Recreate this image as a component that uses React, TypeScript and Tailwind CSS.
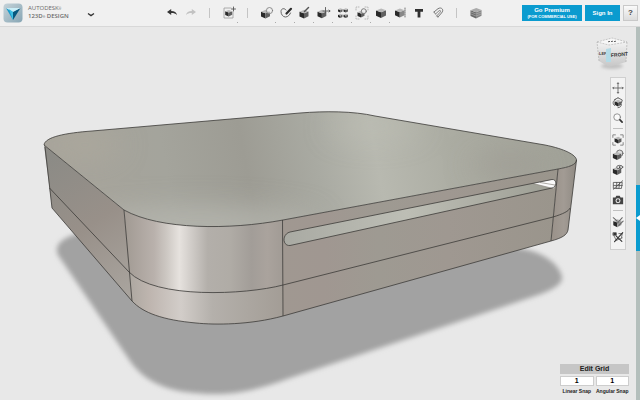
import React from "react";
import type { ReactNode } from "react";

function Svg({ children, size = 14 }: { children: ReactNode; size?: number }) {
  return (
    <svg width={size} height={size} viewBox="0 0 14 14" fill="none" stroke="#444" strokeLinecap="round" strokeLinejoin="round" aria-hidden="true">
      {children}
    </svg>
  );
}

/* Small shaded box, ten units wide, shared by most of the tool icons. */
function Box({ at = "translate(2 2)", dark = "#292929", side = "#606060", top = "#b9b9b9" }: { at?: string; dark?: string; side?: string; top?: string }) {
  return (
    <g transform={at} stroke="none">
      <path d="M0 2.5 5 4.3V10L0 7.7Z" fill={dark} />
      <path d="M5 4.3 10 2.3V7.5L5 10Z" fill={side} />
      <path d="M0 2.5 5.2.4 10 2.3 5 4.3Z" fill={top} />
    </g>
  );
}

const brackets = "M1 4V1H4M10 1H13V4M13 10V13H10M4 13H1V10";

const icons: Record<string, ReactNode> = {
  undo: <path d="M2 6 6.2 3V5C9.500 5 11.500 6 12 9.2 10.500 7.400 9 7 6.200 7V9Z" fill="#333" stroke="none" />,
  redo: <path d="M12 6 7.800 3V5C4.500 5 2.500 6 2 9.200 3.500 7.400 5 7 7.800 7V9Z" fill="#c2c2c2" stroke="none" />,
  insert: (
    <>
      <path d="M9 2H2V12H11V6" stroke="#9a9a9a" strokeWidth=".8" />
      <path d="M11.500 1V5M9.500 3H13.500" stroke="#555" strokeWidth=".9" />
      <Box at="translate(3.200 3.600) scale(.7)" />
    </>
  ),
  primitives: (
    <>
      <Box at="translate(1 3.500) scale(.9)" />
      <circle cx="9.500" cy="4.600" r="3.100" fill="#eee" fillOpacity=".6" stroke="#777" strokeWidth=".8" />
    </>
  ),
  sketch: (
    <>
      <path d="M7 4C6 2 2 2 2 5.500 2 8.500 4 11 6.500 11 9 11 11 8.500 11.500 7" stroke="#666" />
      <path d="M7.500 7.500 12 2.800" stroke="#2c2c2c" strokeWidth="2.200" />
    </>
  ),
  construct: (
    <>
      <Box at="translate(1.500 3.500) scale(.9)" />
      <path d="M6.500 5.500 10.500 1.500" stroke="#555" strokeWidth="1.500" />
    </>
  ),
  modify: (
    <>
      <Box at="translate(.5 3.500) scale(.88)" />
      <path d="M6 5H13M8.500 1.500V7M12 4 13 5 12 6" stroke="#555" strokeWidth=".9" />
    </>
  ),
  pattern: (
    <>
      <Box at="translate(2 2) scale(.45)" />
      <Box at="translate(7.500 2) scale(.45)" />
      <Box at="translate(2 7.500) scale(.45)" />
      <Box at="translate(7.500 7.500) scale(.45)" />
    </>
  ),
  grouping: (
    <>
      <path d={brackets} stroke="#aaa" strokeWidth=".8" strokeDasharray="1.200 1.500" />
      <Box at="translate(2.500 4.500) scale(.7)" />
      <circle cx="8.800" cy="5.200" r="2.500" fill="#eee" fillOpacity=".8" stroke="#666" strokeWidth=".8" />
    </>
  ),
  combine: <Box />,
  measure: (
    <>
      <Box at="translate(2 2) scale(.95)" side="#888" />
      <path d="M12 2V12" stroke="#777" strokeDasharray="1 1" />
    </>
  ),
  text: <path d="M3 3H11V5.800H8.400V11.500H5.600V5.800H3Z" fill="#303030" stroke="none" />,
  snap: (
    <>
      <path d="M3 6 7 2.700C10.500.5 13.500 4 10.500 7L7 11" stroke="#777" strokeWidth="1" />
      <path d="M4.500 8 8 4.800C9.300 4 10.300 5 9 6.300L5.700 10M3 6 4.500 8M5.700 10 7 11" stroke="#777" strokeWidth=".9" />
    </>
  ),
  material: (
    <>
      <Box at="translate(1.500 1.500) scale(1.100)" dark="#686868" side="#858585" top="#aaa" />
      <path d="M2 6 7 8 12.400 6M2 8 7 10 12.400 8" stroke="#b5b5b5" strokeWidth=".6" />
    </>
  ),
  pan: <path d="M7 1V13M1 7H13M6 2 7 1 8 2M6 12 7 13 8 12M2 6 1 7 2 8M12 6 13 7 12 8" stroke="#555" strokeWidth=".9" />,
  orbit: (
    <>
      <Box at="translate(3 3) scale(.8)" />
      <path d="M3 10C0 8 1 4 4 3M7 1 12 3.500 11 7M11 9C11 11 9 12.500 7 12.500M3 3 7 1" stroke="#555" strokeWidth="1" />
    </>
  ),
  zoom: (
    <>
      <circle cx="6" cy="6" r="3.900" fill="#fafafa" stroke="#777" strokeWidth=".9" />
      <path d="M9.300 9.300 11.800 11.800" stroke="#333" strokeWidth="2" />
    </>
  ),
  fit: (
    <>
      <path d={brackets} stroke="#777" />
      <Box at="translate(3 3) scale(.8)" />
    </>
  ),
  shading: (
    <>
      <circle cx="9" cy="5" r="3.800" fill="#ddd" stroke="#555" strokeWidth=".9" />
      <Box at="translate(1 3) scale(.98)" />
    </>
  ),
  visibility: (
    <>
      <Box at="translate(1 3) scale(.98)" />
      <ellipse cx="9" cy="3.600" rx="3.600" ry="2" fill="#eee" stroke="#444" strokeWidth=".9" />
      <circle cx="9" cy="3.600" r="1" fill="#333" stroke="none" />
    </>
  ),
  gridToggle: <path d="M2 4H12L11 11H2ZM2 7.500H12M5.500 4V11M9 4 8 11M1.500 12 12.500 2" stroke="#555" strokeWidth="1" />,
  camera: (
    <>
      <path d="M1 4H4L5 2H9L10 4H13V12H1Z" fill="#444" stroke="none" />
      <circle cx="7" cy="7.800" r="2.900" fill="#eee" stroke="none" />
      <circle cx="7" cy="7.800" r="1.700" fill="#444" stroke="none" />
    </>
  ),
  sketchView: (
    <>
      <Box at="translate(1.500 3.500) scale(.95)" side="#999" />
      <path d="M1.500 2 6 6M6.500 8 12 2M8 11 13 6" stroke="#666" strokeWidth="1.200" />
    </>
  ),
  snapView: (
    <>
      <path d="M1.500 2H5V5H1.500Z" fill="#333" stroke="#444" strokeWidth=".8" />
      <path d="M2.500 6 5 11 12 8M8 3H12L11 8" stroke="#666" strokeWidth="1" />
      <path d="M3 12.500 12.500 2M5 6 11.500 12" stroke="#333" strokeWidth="1.300" />
    </>
  ),
};

type Tool = { icon: string; label: string; menu?: boolean } | null;

const topTools: Tool[] = [
  { icon: "undo", label: "Undo" },
  { icon: "redo", label: "Redo" },
  null,
  { icon: "insert", label: "Insert", menu: true },
  null,
  { icon: "primitives", label: "Primitives", menu: true },
  { icon: "sketch", label: "Sketch", menu: true },
  { icon: "construct", label: "Construct", menu: true },
  { icon: "modify", label: "Modify", menu: true },
  { icon: "pattern", label: "Pattern", menu: true },
  { icon: "grouping", label: "Grouping", menu: true },
  { icon: "combine", label: "Combine", menu: true },
  { icon: "measure", label: "Measure" },
  { icon: "text", label: "Text" },
  { icon: "snap", label: "Snap" },
  null,
  { icon: "material", label: "Material" },
];

const viewTools: Tool[] = [
  { icon: "pan", label: "Pan" },
  { icon: "orbit", label: "Orbit" },
  { icon: "zoom", label: "Zoom" },
  null,
  { icon: "fit", label: "Fit" },
  { icon: "shading", label: "Shading" },
  { icon: "visibility", label: "Visibility" },
  { icon: "gridToggle", label: "Grid" },
  { icon: "camera", label: "Screenshot" },
  null,
  { icon: "sketchView", label: "Sketch visibility" },
  { icon: "snapView", label: "Snapping" },
];

function Logo() {
  return (
    <svg width="20" height="20" viewBox="0 0 20 20" aria-hidden="true">
      <defs>
        <linearGradient id="logo" x2="1" y2="1">
          <stop stopColor="#c6d3d9" />
          <stop offset="1" stopColor="#86a5b4" />
        </linearGradient>
      </defs>
      <rect x=".5" y=".5" width="19" height="19" rx="4" fill="url(#logo)" />
      <path d="M3 5 10 8.500V17Z" fill="#1b9ccb" />
      <path d="M17.500 5 10 8.500V17Z" fill="#07597f" />
      <path d="M3 5H17.500L10 9Z" fill="#c9edf7" />
      <path d="M6 6 10 9V17Z" fill="#3fc0e4" />
    </svg>
  );
}

function Header() {
  return (
    <header className="flex h-[27px] shrink-0 items-center border-b border-[#d8d8d8] bg-[#f0f0f0] pr-[2px]">
      <div className="flex w-[162px] shrink-0 items-center pl-[3px]">
        <Logo />
        <div className="ml-[5px] w-[56px] font-['Open_Sans',sans-serif] text-[6px] leading-[7px] whitespace-nowrap text-[#6a6a6a]">
          <div>AUTODESK<span className="text-[3px]">®</span></div>
          <div className="font-semibold">123D<span className="text-[3px]">®</span> DESIGN</div>
        </div>
        <button type="button" aria-label="Main menu" className="pt-[3px]">
          <svg width="14" height="8" viewBox="0 0 14 8" fill="none" stroke="#333" strokeWidth="1.300" aria-hidden="true">
            <path d="M4 2.500 7 4.600 10 2.500" />
          </svg>
        </button>
      </div>
      <div className="flex shrink-0 items-center">
        {topTools.map((tool, i) =>
          tool ? (
            <button key={i} type="button" aria-label={tool.label} className="relative flex h-[26px] w-[19px] items-center justify-center">
              <Svg>{icons[tool.icon]}</Svg>
              {tool.menu && <span className="absolute right-0 bottom-[3px] h-px w-px bg-[#aaa]" />}
            </button>
          ) : (
            <div key={i} className="flex w-[19px] justify-center">
              <span className="h-[10px] w-px bg-[#c4c4c4]" />
            </div>
          ),
        )}
      </div>
      <div className="ml-auto flex items-center gap-[3px] font-bold whitespace-nowrap text-white">
        <button type="button" className="h-4 w-[60px] bg-[#0a9bcf] text-[6px] leading-[7px]">
          Go Premium
          <span className="block text-[4px] leading-[6px]">(FOR COMMERCIAL USE)</span>
        </button>
        <button type="button" className="h-4 w-[35px] bg-[#0a9bcf] text-[6px] leading-[7px]">Sign In</button>
        <button type="button" aria-label="Help" className="h-4 w-[15px] border border-[#c9c9c9] bg-linear-to-b from-[#fafafa] to-[#dcdcdc] text-[8px] leading-[14px] text-[#444]">?</button>
      </div>
    </header>
  );
}

function Model() {
  return (
    <svg viewBox="0 27 636 373" className="block w-full" role="img" aria-label="Rounded box model">
      <defs>
        <filter id="soft" x="-5%" y="-10%" width="110%" height="120%">
          <feGaussianBlur stdDeviation="2.600" />
        </filter>
        <filter id="glow" x="-50%" y="-100%" width="200%" height="300%">
          <feGaussianBlur stdDeviation="14" />
        </filter>
        <linearGradient id="top" gradientUnits="userSpaceOnUse" x1="70" y1="200" x2="560" y2="110">
          <stop stopColor="#a7a49b" />
          <stop offset=".2" stopColor="#a4a49c" />
          <stop offset=".36" stopColor="#9d9c94" />
          <stop offset=".5" stopColor="#a9aaa2" />
          <stop offset=".62" stopColor="#b8b9b0" />
          <stop offset=".78" stopColor="#abaca2" />
          <stop offset="1" stopColor="#a1a298" />
        </linearGradient>
        <linearGradient id="left" gradientUnits="userSpaceOnUse" x1="48" y1="160" x2="130" y2="290">
          <stop stopColor="#8c8b86" />
          <stop offset=".5" stopColor="#989089" />
          <stop offset="1" stopColor="#a8a39d" />
        </linearGradient>
        <linearGradient id="corner" gradientUnits="userSpaceOnUse" x1="126" y1="0" x2="283" y2="0">
          <stop stopColor="#a29b94" />
          <stop offset=".18" stopColor="#b9b1ac" />
          <stop offset=".26" stopColor="#cdc8c3" />
          <stop offset=".34" stopColor="#e6e2de" />
          <stop offset=".42" stopColor="#cfcbc7" />
          <stop offset=".52" stopColor="#b3afaa" />
          <stop offset=".66" stopColor="#b0aca6" />
          <stop offset=".8" stopColor="#a29d98" />
          <stop offset=".9" stopColor="#aaa39d" />
          <stop offset="1" stopColor="#a19b95" />
        </linearGradient>
        <linearGradient id="base" gradientUnits="userSpaceOnUse" x1="126" y1="0" x2="283" y2="0">
          <stop stopColor="#aaa59e" />
          <stop offset=".15" stopColor="#beb5af" />
          <stop offset=".35" stopColor="#d2cdc9" />
          <stop offset=".55" stopColor="#b4b0ab" />
          <stop offset="1" stopColor="#a39d96" />
        </linearGradient>
        <linearGradient id="front" gradientUnits="userSpaceOnUse" x1="283" y1="0" x2="558" y2="0">
          <stop stopColor="#a09891" />
          <stop offset=".15" stopColor="#a09791" />
          <stop offset=".35" stopColor="#9e9a92" />
          <stop offset=".6" stopColor="#9f9891" />
          <stop offset="1" stopColor="#9a958c" />
        </linearGradient>
        <linearGradient id="right" x2="1">
          <stop stopColor="#999189" />
          <stop offset=".5" stopColor="#a29b94" />
          <stop offset="1" stopColor="#8f8a83" />
        </linearGradient>
        <linearGradient id="slot" x2="1">
          <stop stopColor="#a9aaa3" />
          <stop offset=".45" stopColor="#bdbeb5" />
          <stop offset="1" stopColor="#9d9e94" />
        </linearGradient>
        <clipPath id="topClip">
          <path d="M44 145C45 137 65 133 92 131L300 113C325 111 353 111 375 116L545 145C565 149 576 155 576.500 160 576 165 569 167 558 169L283 220C230 230 160 230 124 210Z" />
        </clipPath>
      </defs>

      <path filter="url(#soft)" fill="#a2a2a2" d="M80 233C61 238 54 245 58 255L130 361C147 386 177 394 215 394 243 394 265 387 290 378L538 295C555 289 563 283 562 277 560 266 546 253 523 249L400 220 150 225Z" />

      <path fill="url(#left)" d="M44 145 124 210 132 301 52 208Z" />
      <path fill="url(#corner)" d="M124 210C160 230 230 230 282.500 220L283 285C245 295 155 299 129 272Z" />
      <path fill="url(#base)" d="M129 272C155 299 245 295 283 285V316C250 325 215 325 196 323 163 320 143 313 132 301Z" />
      <path fill="url(#front)" d="M282.500 220 558 169 551 241 283 316Z" />
      <path fill="url(#right)" d="M558 169C570 167 576 164 576.500 160L568 230C567 235 562 238 551 241Z" />

      <g clipPath="url(#topClip)">
        <path fill="url(#top)" d="M40 105H580V235H40Z" />
        <g filter="url(#glow)">
          <ellipse cx="200" cy="224" rx="120" ry="16" fill="#b9bab3" opacity=".8" />
          <ellipse cx="375" cy="126" rx="45" ry="12" fill="#bec0b6" opacity=".6" />
          <ellipse cx="85" cy="145" rx="35" ry="12" fill="#aea99e" opacity=".7" />
          <ellipse cx="510" cy="165" rx="40" ry="9" fill="#9a968f" opacity=".7" />
        </g>
      </g>

      <path fill="url(#slot)" d="M290 232 552 179.500C557 179 557 187 552 188L290 245.500C282 246 282 234 290 232Z" />
      <path fill="#fafafa" d="M533 183.500 553 179.500C557 180 556 187 553 188.500Z" />
      <path fill="none" stroke="#8b877f" strokeWidth=".7" d="M540 182.500 555 185M533 183.500 553 188.500" />

      <g fill="none" stroke="#3c3b38" strokeWidth=".8" strokeLinejoin="round">
        <path d="M44 145C45 137 65 133 92 131L300 113C325 111 353 111 375 116L545 145C565 149 576 155 576.500 160 576 165 569 167 558 169L283 220C230 230 160 230 124 210Z" />
        <path d="M45 147 52 208 132 301C143 313 163 320 196 323 215 325 250 325 283 316L551 241C562 238 567 235 568 230L576.500 160" />
        <path d="M49.500 188 129 272C155 299 245 295 283 285L553 217C563 214 569 211 570 208" />
        <path d="M124 210 132 301M282.500 220 283 316M558 169 551 241" />
        <path d="M290 232 552 179.500C557 179 557 187 552 188L290 245.500C282 246 282 234 290 232Z" />
      </g>
    </svg>
  );
}

function ViewCube() {
  return (
    <svg width="36" height="36" viewBox="0 0 36 36" className="absolute top-[10px] right-[6px]" fontFamily="Liberation Sans, Arial, sans-serif" fontWeight="bold" role="img" aria-label="View cube">
      <defs>
        <linearGradient id="cube" x2="0" y2="1">
          <stop stopColor="#f2f2f2" />
          <stop offset="1" stopColor="#c6c6c6" />
        </linearGradient>
        <filter id="cubeSoft" x="-20%" y="-60%" width="140%" height="220%">
          <feGaussianBlur stdDeviation="1.500" />
        </filter>
      </defs>
      <ellipse cx="18" cy="29" rx="11" ry="3" fill="#c2c2c2" filter="url(#cubeSoft)" />
      <path d="M3 5 15 8V30L5 24Z" fill="url(#cube)" />
      <path d="M15 8 33 5 32 25 15 30Z" fill="url(#cube)" />
      <path d="M3 5 18 1 33 5 15 8Z" fill="#f7f7f7" />
      <path d="M3 5 18 1 33 5 15 8ZM5 24 3 5M32 25 33 5" fill="none" stroke="#aaa" strokeWidth=".6" strokeDasharray="2 1" />
      <path d="M14 4.800 16 4.400M17 4.600 19 4.200M20 4.600 22 4.200" stroke="#555" strokeWidth=".9" />
      <text x="5" y="18" fontSize="4" fill="#444">LEFT</text>
      <path d="M12 12 17 11V25L12 25Z" fill="#b3dbe7" />
      <text x="17" y="20" fontSize="5" fill="#333" transform="rotate(-5 17 20)">FRONT</text>
    </svg>
  );
}

function ViewTools() {
  return (
    <nav aria-label="View tools" className="absolute top-[50px] right-[10px] flex w-4 flex-col items-center border border-[#cfcfcf] bg-[#f3f3f3] pt-[2px] pb-[5px]">
      {viewTools.map((tool, i) =>
        tool ? (
          <button key={i} type="button" aria-label={tool.label} className="flex h-[15px] items-center justify-center">
            <Svg size={12}>{icons[tool.icon]}</Svg>
          </button>
        ) : (
          <span key={i} className="my-[3px] h-px w-[10px] bg-[#c0c0c0]" />
        ),
      )}
    </nav>
  );
}

function SnapField({ id, label }: { id: string; label: string }) {
  return (
    <div className="flex flex-1 flex-col items-center">
      <input id={id} defaultValue="1" className="h-[10px] w-full border border-[#cdcdcd] bg-white text-center text-[7px] font-bold text-black" />
      <label htmlFor={id} className="text-[5px] leading-[10px] font-bold whitespace-nowrap text-[#222]">{label}</label>
    </div>
  );
}

function GridPanel() {
  return (
    <section className="absolute right-[7px] bottom-1 w-[69px]">
      <button type="button" className="mb-[2px] block h-[10px] w-full bg-[#c6c6c6] text-[7px] leading-[10px] font-bold text-[#222]">Edit Grid</button>
      <div className="flex gap-[2px]">
        <SnapField id="linear" label="Linear Snap" />
        <SnapField id="angular" label="Angular Snap" />
      </div>
    </section>
  );
}

export default function App() {
  return (
    <div className="flex min-h-screen flex-col bg-[#e8e8e8] font-['Liberation_Sans',Arial,sans-serif]">
      <Header />
      <div className="flex flex-1">
        <main className="relative min-w-0 flex-1">
          <Model />
          <ViewCube />
          <ViewTools />
          <GridPanel />
        </main>
        <aside className="w-1 shrink-0 bg-[#b4bfbc] pt-[158px]">
          <button type="button" aria-label="Open parts panel" className="flex h-[66px] w-full items-center bg-[#0a9bcf]">
            <svg width="4" height="6" viewBox="0 0 4 6" aria-hidden="true"><path d="M4 0V6L0 3Z" fill="#fff" /></svg>
          </button>
        </aside>
      </div>
    </div>
  );
}
